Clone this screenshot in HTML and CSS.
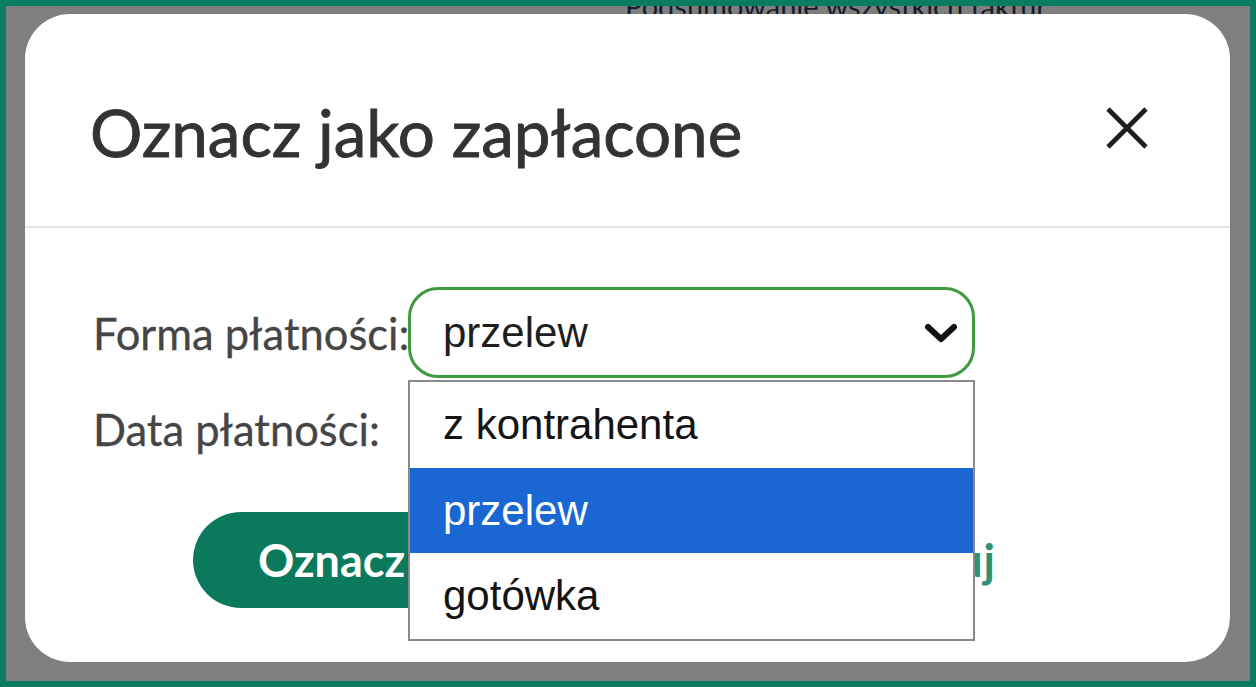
FILE: index.html
```html
<!DOCTYPE html>
<html lang="pl">
<head>
<meta charset="utf-8">
<title>Oznacz jako zapłacone</title>
<link rel="stylesheet" href="styles.css">
</head>
<body>
<div class="frame">
  <div class="page">
    <div class="bg-title">Podsumowanie wszystkich faktur</div>
  </div>
  <div class="overlay">
    <div class="modal">
      <div class="modal-header">
        <h2 class="modal-title">Oznacz jako zapłacone</h2>
        <button class="close" aria-label="Zamknij">
          <svg width="44" height="44" viewBox="0 0 44 44"><path d="M3 3 L41 41 M41 3 L3 41" stroke="#1e1e1e" stroke-width="4.6" fill="none"/></svg>
        </button>
      </div>
      <div class="modal-body">
        <div class="row">
          <label class="label">Forma płatności:</label>
          <div class="select-wrap">
            <div class="select">
              <span class="select-value">przelew</span>
              <svg class="chev" width="34" height="22" viewBox="0 0 34 22"><path d="M4 5 L17 17 L30 5" stroke="#111" stroke-width="6" fill="none" stroke-linejoin="round" stroke-linecap="round"/></svg>
            </div>
            <ul class="dropdown">
              <li class="option">z kontrahenta</li>
              <li class="option selected">przelew</li>
              <li class="option">gotówka</li>
            </ul>
          </div>
        </div>
        <div class="row">
          <label class="label">Data płatności:</label>
          <div class="date-input"></div>
        </div>
        <div class="actions">
          <button class="btn-primary">Oznacz jako zapłacone</button>
          <a class="btn-link">Anuluj</a>
        </div>
      </div>
    </div>
  </div>
</div>
</body>
</html>
```

FILE: styles.css
```css
* { box-sizing: border-box; }
html, body { margin: 0; padding: 0; }
body { font-family: Lato, "Open Sans", sans-serif; }

.frame {
  width: 1256px;
  height: 687px;
  border: 6px solid #0a7c5f;
  position: relative;
  overflow: hidden;
}
.page {
  width: 100%;
  height: 100%;
  background: #fff;
  overflow: hidden;
}
.bg-title {
  margin-left: 619px;
  font-family: Lato, sans-serif;
  font-size: 29px;
  line-height: 0;
  color: #2c3a55;
}
.overlay {
  position: absolute;
  inset: 0;
  background: rgba(0, 0, 0, 0.5);
  padding: 8px 20px 19px 19px;
  display: flex;
}
.modal {
  flex: 1;
  background: #fff;
  border-radius: 45px;
  display: flex;
  flex-direction: column;
}
.modal-header {
  display: flex;
  justify-content: space-between;
  align-items: flex-start;
  padding: 79px 81px 55px 65px;
  border-bottom: 2px solid #e4e4e4;
}
.modal-title {
  margin: 0;
  font-size: 65.5px;
  line-height: 78px;
  font-weight: 400;
  color: #333;
  -webkit-text-stroke: 0.9px #333;
}
.close {
  margin-top: 13px;
  padding: 0;
  border: 0;
  background: none;
  width: 44px;
  height: 44px;
}
.close svg { display: block; }

.modal-body {
  padding: 59px 0 0 68px;
  display: flex;
  flex-direction: column;
}
.row {
  display: flex;
  align-items: center;
  gap: 3px;
  height: 91px;
  margin-bottom: 5px;
}
.label {
  font-size: 43.5px;
  color: #454545;
  width: 312px;
  white-space: nowrap;
  -webkit-text-stroke: 0.3px #454545;
}
.select-wrap {
  position: relative;
}
.select {
  width: 567px;
  height: 91px;
  border: 3px solid #3f9a3f;
  border-radius: 30px;
  display: flex;
  align-items: center;
  justify-content: space-between;
  padding: 0 14px 0 32px;
}
.select-value {
  font-family: "Liberation Sans", Arial, sans-serif;
  font-size: 42px;
  color: #1e1e1e;
}
.chev { display: block; }

.dropdown {
  position: absolute;
  top: 93px;
  left: 0;
  width: 567px;
  margin: 0;
  padding: 0;
  list-style: none;
  background: #fff;
  border: 2px solid #8a8a8a;
  z-index: 5;
}
.option {
  height: 86px;
  display: flex;
  align-items: center;
  padding-left: 33px;
  font-family: "Liberation Sans", Arial, sans-serif;
  font-size: 42px;
  color: #141414;
}
.option.selected {
  background: #1a66d2;
  color: #fff;
  height: 85px;
}
.date-input {
  width: 567px;
  height: 91px;
  border: 3px solid #cfcfcf;
  border-radius: 30px;
}

.actions {
  display: flex;
  align-items: center;
  margin-top: 33px;
  padding: 0 234px 0 100px;
}
.btn-primary {
  height: 96px;
  border: 0;
  border-radius: 48px;
  background: #0b7a5c;
  color: #fff;
  font-family: Lato, sans-serif;
  font-weight: 700;
  font-size: 45px;
  padding: 0 65px;
  white-space: nowrap;
}
.btn-link {
  margin-left: auto;
  font-family: Lato, sans-serif;
  font-weight: 700;
  font-size: 45px;
  letter-spacing: 1px;
  color: #2e9272;
}
```
